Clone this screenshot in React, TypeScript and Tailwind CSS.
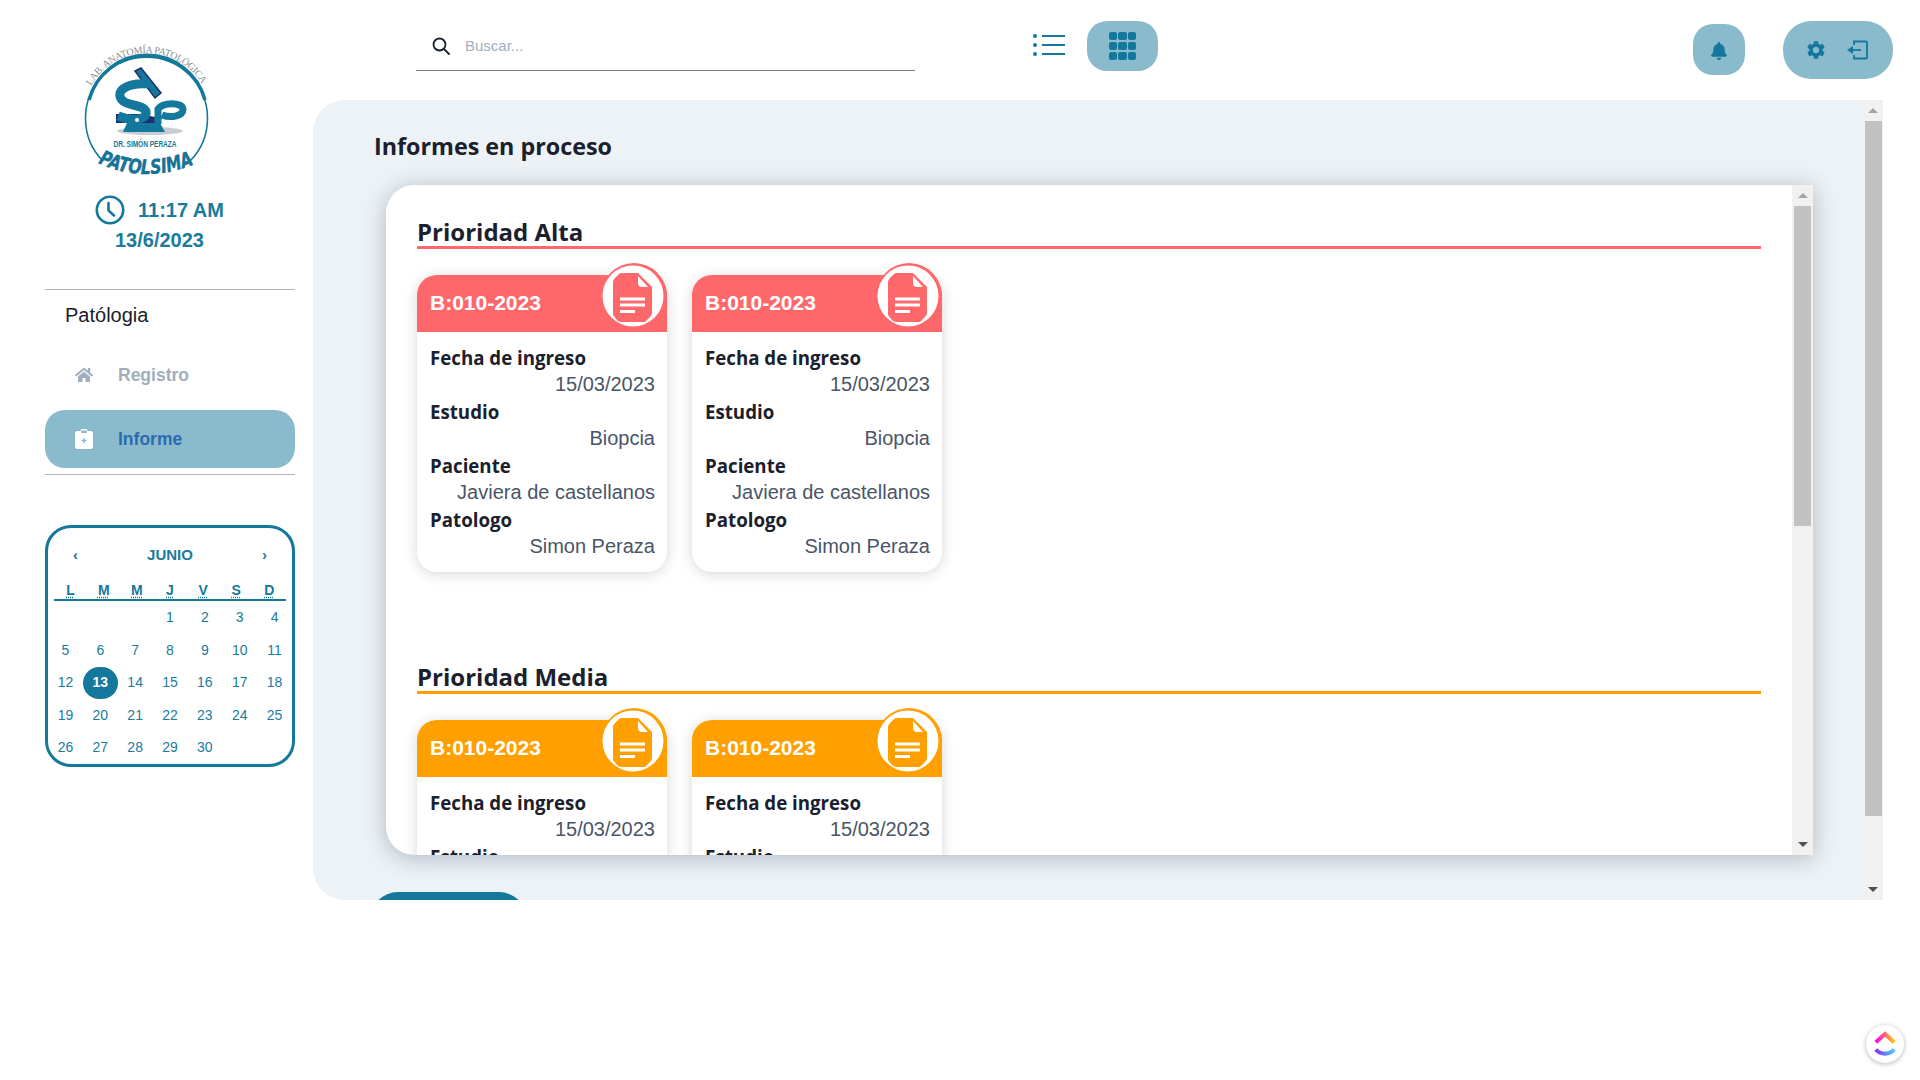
import { FaHome, FaBell } from "react-icons/fa";
import { MdSettings } from "react-icons/md";

const days = [
  ["", "", "", "1", "2", "3", "4"],
  ["5", "6", "7", "8", "9", "10", "11"],
  ["12", "13", "14", "15", "16", "17", "18"],
  ["19", "20", "21", "22", "23", "24", "25"],
  ["26", "27", "28", "29", "30", "", ""],
];

const fields = [
  { label: "Fecha de ingreso", value: "15/03/2023" },
  { label: "Estudio", value: "Biopcia" },
  { label: "Paciente", value: "Javiera de castellanos" },
  { label: "Patologo", value: "Simon Peraza" },
];

function Logo() {
  return (
    <svg viewBox="72 40 150 135" className="w-[150px] h-[135px]">
      <defs>
        <path id="arcTop" d="M 91 86 A 64 64 0 0 1 203 86" />
        <path id="arcBottom" d="M 98 163 Q 146 185 197 163" />
      </defs>
      <path d="M 103 161 A 61 61 0 1 1 190 161" fill="none" stroke="#13789b" strokeWidth="1.6" />
      <path d="M 89 100 A 60 60 0 0 1 205 100" fill="none" stroke="#13789b" strokeWidth="3.5" />
      <text fontSize="10" fill="#8a8f94" fontFamily="Liberation Serif, serif">
        <textPath href="#arcTop" textLength="134">LAB. ANATOMÍA PATOLÓGICA</textPath>
      </text>
      <ellipse cx="150" cy="131" rx="33" ry="4" fill="#c9ccd1" />
      <path d="M 123 132 L 127 123 H 160 L 165 132 Z" fill="#13789b" />
      <path d="M 116 114 H 140 L 160 118 V 123 H 116 Z" fill="#1c2f6e" />
      <path d="M 135 71 L 141 68 L 161 93 L 155 98 Z" fill="#13789b" stroke="#1c2f6e" strokeWidth="1.5" />
      <path
        d="M 150 84 C 125 82 115 92 122 100 C 128 107 148 104 146 114 C 145 120 130 121 118 116"
        fill="none"
        stroke="#13789b"
        strokeWidth="9"
      />
      <circle cx="137" cy="120" r="2" fill="#ffffff" />
      <path d="M 158 124 V 109 C 163 102 182 102 183 109 C 183 117 170 118 162 115" fill="none" stroke="#13789b" strokeWidth="7" />
      <text x="145" y="147" textAnchor="middle" fontSize="8.2" fontWeight="700" fill="#13789b" fontFamily="Liberation Sans Narrow, Liberation Sans, sans-serif" textLength="63" lengthAdjust="spacingAndGlyphs">
        DR. SIMÓN PERAZA
      </text>
      <text fontSize="20" fontWeight="700" fontStyle="italic" fill="#13789b" stroke="#0d4f78" strokeWidth="0.4" fontFamily="DejaVu Sans, sans-serif">
        <textPath href="#arcBottom" textLength="99" lengthAdjust="spacingAndGlyphs">PATOLSIMA</textPath>
      </text>
    </svg>
  );
}

function Sidebar() {
  return (
    <aside className="w-[313px] shrink-0 pl-[45px] pr-[18px] flex flex-col">
      <div className="h-[40px] -ml-[45px] -mr-[18px]" />
      <div className="-ml-[45px]">
        <div className="pl-[72px]">
          <Logo />
        </div>
      </div>
      <div className="h-[20px] flex items-center gap-[13px] pl-[50px] mt-[25px] text-[20px] font-bold text-[#1a7b9c] leading-[30px]">
        <svg viewBox="0 0 30 30" className="w-[30px] h-[30px] shrink-0" fill="none" stroke="#13789b" strokeWidth="2.6" strokeLinecap="round">
          <circle cx="15" cy="15" r="13.2" />
          <path d="M 13.5 8 V 15.5 L 19 20.5" />
        </svg>
        <span>11:17 AM</span>
      </div>
      <div className="text-[20px] font-bold text-[#1a7b9c] leading-[30px] pl-[70px] mt-[5px]">13/6/2023</div>

      <div className="h-px bg-[#b5b5b5] mt-[34px]" />
      <div className="text-[20px] text-[#1a202c] leading-[30px] pl-[20px] mt-[10px]">Patólogia</div>

      <div className="h-[40px] mt-[25px] flex items-center pl-[30px] gap-[25px] text-[17.5px] font-bold text-[#a0aec0]">
        <FaHome className="w-[18px] h-[18px]" />
        <span>Registro</span>
      </div>
      <div className="h-[58px] mt-[15px] rounded-[20px] bg-[#8abbcd] flex items-center pl-[30px] gap-[25px] text-[17.5px] font-bold text-[#2b6cb0]">
        <svg viewBox="0 0 18 20" className="w-[18px] h-[20px]">
          <path d="M 2 2 H 5.5 V 1.5 A 1.5 1.5 0 0 1 7 0 H 11 A 1.5 1.5 0 0 1 12.5 1.5 V 2 H 16 A 2 2 0 0 1 18 4 V 18 A 2 2 0 0 1 16 20 H 2 A 2 2 0 0 1 0 18 V 4 A 2 2 0 0 1 2 2 Z" fill="#ffffff" />
          <rect x="6" y="1.5" width="6" height="2.5" rx="1" fill="#8abbcd" />
          <path d="M 9 9 V 14 M 6.5 11.5 H 11.5" stroke="#8abbcd" strokeWidth="1.4" />
        </svg>
        <span>Informe</span>
      </div>
      <div className="h-px bg-[#b5b5b5] mt-[6px]" />

      <div className="mt-[50px] h-[242px] border-[3px] border-[#13789b] rounded-[26px] text-[#1a7b9c] flex flex-col">
        <div className="flex items-center justify-between px-[25px] h-[40px] mt-[7px] text-[15px] font-bold">
          <span>‹</span>
          <span>JUNIO</span>
          <span>›</span>
        </div>
        <div className="mx-[6px] grid grid-cols-7 h-[25px] pt-[2px] border-b-2 border-[#13789b] text-[14px] font-bold text-center text-[#13789b] leading-[24px] mt-[1px]">
          {["L", "M", "M", "J", "V", "S", "D"].map((d, i) => (
            <span key={i} className="underline decoration-dotted underline-offset-2">
              {d}
            </span>
          ))}
        </div>
        <div className="grid grid-cols-7 text-[14px] text-center mt-[1px]">
          {days.flat().map((d, i) =>
            d === "13" ? (
              <span key={i} className="h-[32.5px] rounded-full bg-[#13789b] text-white font-bold flex items-center justify-center">
                {d}
              </span>
            ) : (
              <span key={i} className="h-[32.5px] flex items-center justify-center">
                {d}
              </span>
            )
          )}
        </div>
      </div>
    </aside>
  );
}

function DocBadge({ color }: { color: string }) {
  return (
    <svg viewBox="0 0 66 66" className="absolute -top-[12px] right-0 w-[66px] h-[66px]">
      <circle cx="33" cy="33" r="33" fill={color} />
      <circle cx="32" cy="33" r="30.5" fill="#ffffff" />
      <path d="M 21 10 H 37 L 51 24 V 50 Q 51 52 49 54 L 44 59 H 20 Q 18 59 16 57 L 12 52 V 19 Q 12 17 14 15 L 18 11 Q 19 10 21 10 Z" fill={color} />
      <path d="M 37 13 L 47 24 H 41 Q 37 24 37 20 Z" fill="#ffffff" />
      <path d="M 19 36 H 44 M 19 42 H 44 M 19 48.5 H 34" stroke="#ffffff" strokeWidth="3" />
    </svg>
  );
}

function ReportCard({ headerClass, color }: { headerClass: string; color: string }) {
  return (
    <div className="w-[250px] h-[297px] shrink-0 rounded-[20px] bg-white shadow-[0_2px_14px_rgba(0,0,0,0.16)]">
      <div className={`relative h-[57px] rounded-t-[20px] pl-[13px] pb-[2px] flex items-center text-[21px] font-bold text-white ${headerClass}`}>
        B:010-2023
        <DocBadge color={color} />
      </div>
      <div className="pl-[13px] pr-[12px] pt-[12px]">
        {fields.map((f) => (
          <div key={f.label}>
            <div className="font-['Open_Sans',sans-serif] font-bold text-[18.7px] leading-[27px] text-[#1a202c]">{f.label}</div>
            <div className="text-[20px] leading-[27px] text-right text-[#4a5568]">{f.value}</div>
          </div>
        ))}
      </div>
    </div>
  );
}

function PrioritySection({ title, borderClass, headerClass, color }: { title: string; borderClass: string; headerClass: string; color: string }) {
  return (
    <section className="w-[1344px]">
      <h2 className={`h-[36px] border-b-[3px] font-['Open_Sans',sans-serif] font-bold text-[24px] leading-[37px] text-[#1a202c] ${borderClass}`}>{title}</h2>
      <div className="flex gap-[25px] mt-[26px]">
        <ReportCard headerClass={headerClass} color={color} />
        <ReportCard headerClass={headerClass} color={color} />
      </div>
    </section>
  );
}

function ScrollBar({ thumbClass, trackClass }: { thumbClass: string; trackClass: string }) {
  return (
    <div className={`shrink-0 bg-[#f1f1f1] flex flex-col items-center ${trackClass}`}>
      <div className="h-[21px] w-full flex items-center justify-center">
        <div className="w-0 h-0 border-x-[5px] border-x-transparent border-b-[5px] border-b-[#a3a3a3]" />
      </div>
      <div className={`w-[17px] bg-[#c1c1c1] ${thumbClass}`} />
      <div className="flex-1" />
      <div className="h-[21px] w-full flex items-center justify-center">
        <div className="w-0 h-0 border-x-[5px] border-x-transparent border-t-[5px] border-t-[#505050]" />
      </div>
    </div>
  );
}

function TopBar() {
  return (
    <header className="h-[100px] flex items-start relative">
      <div className="w-[499px] h-[50px] mt-[21px] ml-[103px] border-b border-[#808080] flex items-center pl-[16px] gap-[15px] text-[15px] text-[#a0aec0]">
        <svg viewBox="0 0 18 18" className="w-[18px] h-[18px]" fill="none" stroke="#1a202c" strokeWidth="1.8" strokeLinecap="round">
          <circle cx="7.5" cy="7.5" r="6" />
          <path d="M 12 12 L 17 17" />
        </svg>
        <span className="pt-[1px]">Buscar...</span>
      </div>
      <svg viewBox="0 0 32 24" className="w-[32px] h-[24px] mt-[33px] ml-[118px]" stroke="#13789b" strokeWidth="2.2" fill="#13789b">
        <circle cx="2" cy="3" r="2" stroke="none" />
        <circle cx="2" cy="12" r="2" stroke="none" />
        <circle cx="2" cy="21" r="2" stroke="none" />
        <path d="M 9 3 H 32 M 9 12 H 32 M 9 21 H 32" />
      </svg>
      <div className="w-[71px] h-[50px] mt-[21px] ml-[22px] rounded-[20px] bg-[#8abbcd] flex items-center justify-center">
        <div className="grid grid-cols-3 gap-[1.5px] w-[28px]">
          {Array.from({ length: 9 }).map((_, i) => (
            <span key={i} className="h-[8.5px] rounded-[2px] bg-[#13789b]" />
          ))}
        </div>
      </div>
      <div className="w-[52px] h-[51px] mt-[24px] ml-[535px] rounded-[20px] bg-[#8abbcd] flex items-center justify-center text-[#13789b]">
        <FaBell className="w-[16px] h-[18px] mt-[3px]" />
      </div>
      <div className="w-[110px] h-[58px] mt-[21px] ml-[38px] rounded-[28px] bg-[#8abbcd] flex items-center pl-[22px] gap-[20px] text-[#13789b]">
        <MdSettings className="w-[22px] h-[22px]" />
        <svg viewBox="0 0 21 20" className="w-[21px] h-[20px]" fill="none" stroke="#13789b" strokeWidth="1.8">
          <path d="M 7 5 V 1.5 H 19 A 1 1 0 0 1 20 2.5 V 17.5 A 1 1 0 0 1 19 18.5 H 7 V 15" />
          <path d="M 5 10 H 14" />
          <path d="M 0 10 L 6 6 V 14 Z" fill="#13789b" stroke="none" />
        </svg>
      </div>
    </header>
  );
}

function ClickUpBadge() {
  return (
    <div className="fixed left-[1866px] top-[1025px] w-[38px] h-[38px] rounded-full bg-white shadow-[0_1px_5px_rgba(0,0,0,0.3)] flex items-center justify-center">
      <svg viewBox="0 0 24 28" className="w-[22px] h-[26px]" fill="none" strokeWidth="4.4">
        <defs>
          <linearGradient id="cuTop" x1="0" y1="0" x2="1" y2="0">
            <stop offset="0" stopColor="#ff02f0" />
            <stop offset="1" stopColor="#ffc800" />
          </linearGradient>
          <linearGradient id="cuBottom" x1="0" y1="0" x2="1" y2="0">
            <stop offset="0" stopColor="#8930fd" />
            <stop offset="1" stopColor="#49ccf9" />
          </linearGradient>
        </defs>
        <path d="M 2 12 L 12 3 L 22 12" stroke="url(#cuTop)" />
        <path d="M 2 20 C 7 26 17 26 22 20" stroke="url(#cuBottom)" />
      </svg>
    </div>
  );
}

export default function App() {
  return (
    <div className="w-[1920px] h-[1080px] bg-white flex font-['Liberation_Sans',Arial,sans-serif] overflow-hidden">
      <Sidebar />
      <div className="flex-1 min-w-0">
        <TopBar />
        <main className="w-[1570px] h-[800px] rounded-l-[32px] bg-[#edf2f6] flex overflow-hidden">
          <div className="flex-1 min-w-0 pt-[28px] overflow-hidden">
            <h1 className="h-[36px] ml-[61px] font-['Open_Sans',sans-serif] font-bold text-[23.3px] leading-[36px] text-[#1a202c]">Informes en proceso</h1>
            <div className="ml-[73px] mt-[21px] w-[1427px] h-[670px] rounded-l-[28px] bg-white flex shadow-[0_3px_22px_rgba(40,60,85,0.32)]">
              <div className="flex-1 min-w-0 rounded-l-[28px] overflow-hidden pl-[31px] pt-[28px] flex flex-col gap-[86px]">
                <PrioritySection title="Prioridad Alta" borderClass="border-[#ff686b]" headerClass="bg-[#ff686b]" color="#ff686b" />
                <PrioritySection title="Prioridad Media" borderClass="border-[#ffa000]" headerClass="bg-[#ffa000]" color="#ffa000" />
              </div>
              <ScrollBar trackClass="w-[21px]" thumbClass="h-[320px]" />
            </div>
            <div className="ml-[57px] mt-[37px] w-[157px] h-[56px] rounded-[28px] bg-[#13789b]" />
          </div>
          <ScrollBar trackClass="w-[20px]" thumbClass="h-[695px]" />
        </main>
      </div>
      <ClickUpBadge />
    </div>
  );
}
